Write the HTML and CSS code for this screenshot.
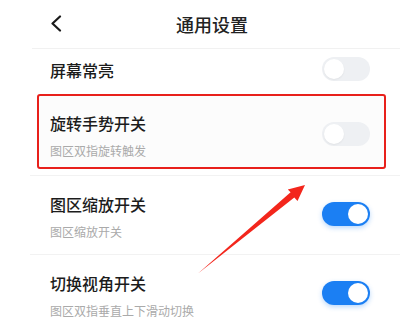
FILE: index.html
```html
<!DOCTYPE html>
<html lang="zh-CN">
<head>
<meta charset="utf-8">
<title>通用设置</title>
<link rel="stylesheet" href="styles.css">
</head>
<body>
<div class="screen">
  <header class="nav">
    <svg class="back" width="12" height="17" viewBox="0 0 12 17"><path d="M10 1.5 L2.5 8.5 L10 15.5" fill="none" stroke="#1a1a1a" stroke-width="2.2" stroke-linecap="round" stroke-linejoin="round"/></svg>
    <h1 class="nav-title">通用设置</h1>
  </header>

  <div class="row row-simple">
    <div class="title">屏幕常亮</div>
    <span class="switch off top-simple"></span>
  </div>

  <div class="row boxed">
    <div class="text">
      <div class="title">旋转手势开关</div>
      <div class="sub">图区双指旋转触发</div>
    </div>
    <span class="switch off top-box"></span>
  </div>

  <div class="sep"></div>

  <div class="row item">
    <div class="text">
      <div class="title">图区缩放开关</div>
      <div class="sub">图区缩放开关</div>
    </div>
    <span class="switch on"></span>
  </div>

  <div class="sep"></div>

  <div class="row item">
    <div class="text">
      <div class="title">切换视角开关</div>
      <div class="sub">图区双指垂直上下滑动切换</div>
    </div>
    <span class="switch on"></span>
  </div>

  <svg class="arrow" width="400" height="328" viewBox="0 0 400 328">
    <polygon points="305,185 297.5,201 294.3,197.6 198,273.5 290.6,192.2 287.8,189.6" fill="#f3261c"/>
  </svg>
</div>
</body>
</html>
```

FILE: styles.css
```css
* { box-sizing: border-box; }
html, body { margin: 0; padding: 0; background: #fff; }
body {
  font-family: "Noto Sans CJK SC", "Noto Sans", sans-serif;
  color: #1a1a1a;
}
.screen {
  position: relative;
  width: 400px;
  height: 328px;
  overflow: hidden;
  background: #fff;
}
.nav {
  display: flex;
  align-items: center;
  height: 49px;
  margin-left: 32px;
  padding-left: 18px;
  padding-bottom: 1px;
  border-bottom: 1px solid #f1f1f1;
}
.back { display: block; }
.nav-title {
  margin: 0 0 0 114px;
  font-size: 18px;
  font-weight: 500;
  line-height: 24px;
  color: #222;
}
.row {
  display: flex;
  justify-content: space-between;
  align-items: flex-start;
}
.row-simple {
  height: 45px;
  padding: 10px 30px 0 50px;
}
.title {
  font-size: 16px;
  font-weight: 500;
  line-height: 22px;
  color: #1c1c1c;
}
.sub {
  margin-top: 9px;
  font-size: 12px;
  line-height: 16px;
  color: #aaaaaa;
}
.boxed {
  height: 75px;
  margin: 0 14px 0 37px;
  padding: 16px 14px 0 11px;
  border: 2px solid #e8201b;
  border-radius: 3px;
  background: #fcfcfc;
}
.sep {
  height: 1px;
  margin-left: 30px;
  background: #f2f2f2;
}
.boxed + .sep { margin-top: 6px; }
.item {
  height: 78px;
  padding: 17px 30px 0 50px;
}
.switch {
  position: relative;
  display: block;
  flex: none;
  width: 48px;
  height: 24px;
  margin-top: 9px;
  border-radius: 12px;
}
.top-simple { margin-top: -2px; }
.top-box { margin-top: 10px; }
.switch::after {
  content: "";
  position: absolute;
  top: 2px;
  width: 20px;
  height: 20px;
  border-radius: 50%;
  background: #fff;
}
.switch.off { background: #eef0f3; }
.switch.off::after {
  left: 2px;
  box-shadow: 0 1px 2px rgba(0, 0, 0, 0.06);
}
.switch.on {
  background: #1b7ff3;
  box-shadow: 0 2px 5px rgba(27, 127, 243, 0.3);
}
.switch.on::after { right: 2px; }
.arrow {
  position: absolute;
  left: 0;
  top: 0;
  pointer-events: none;
}
```
